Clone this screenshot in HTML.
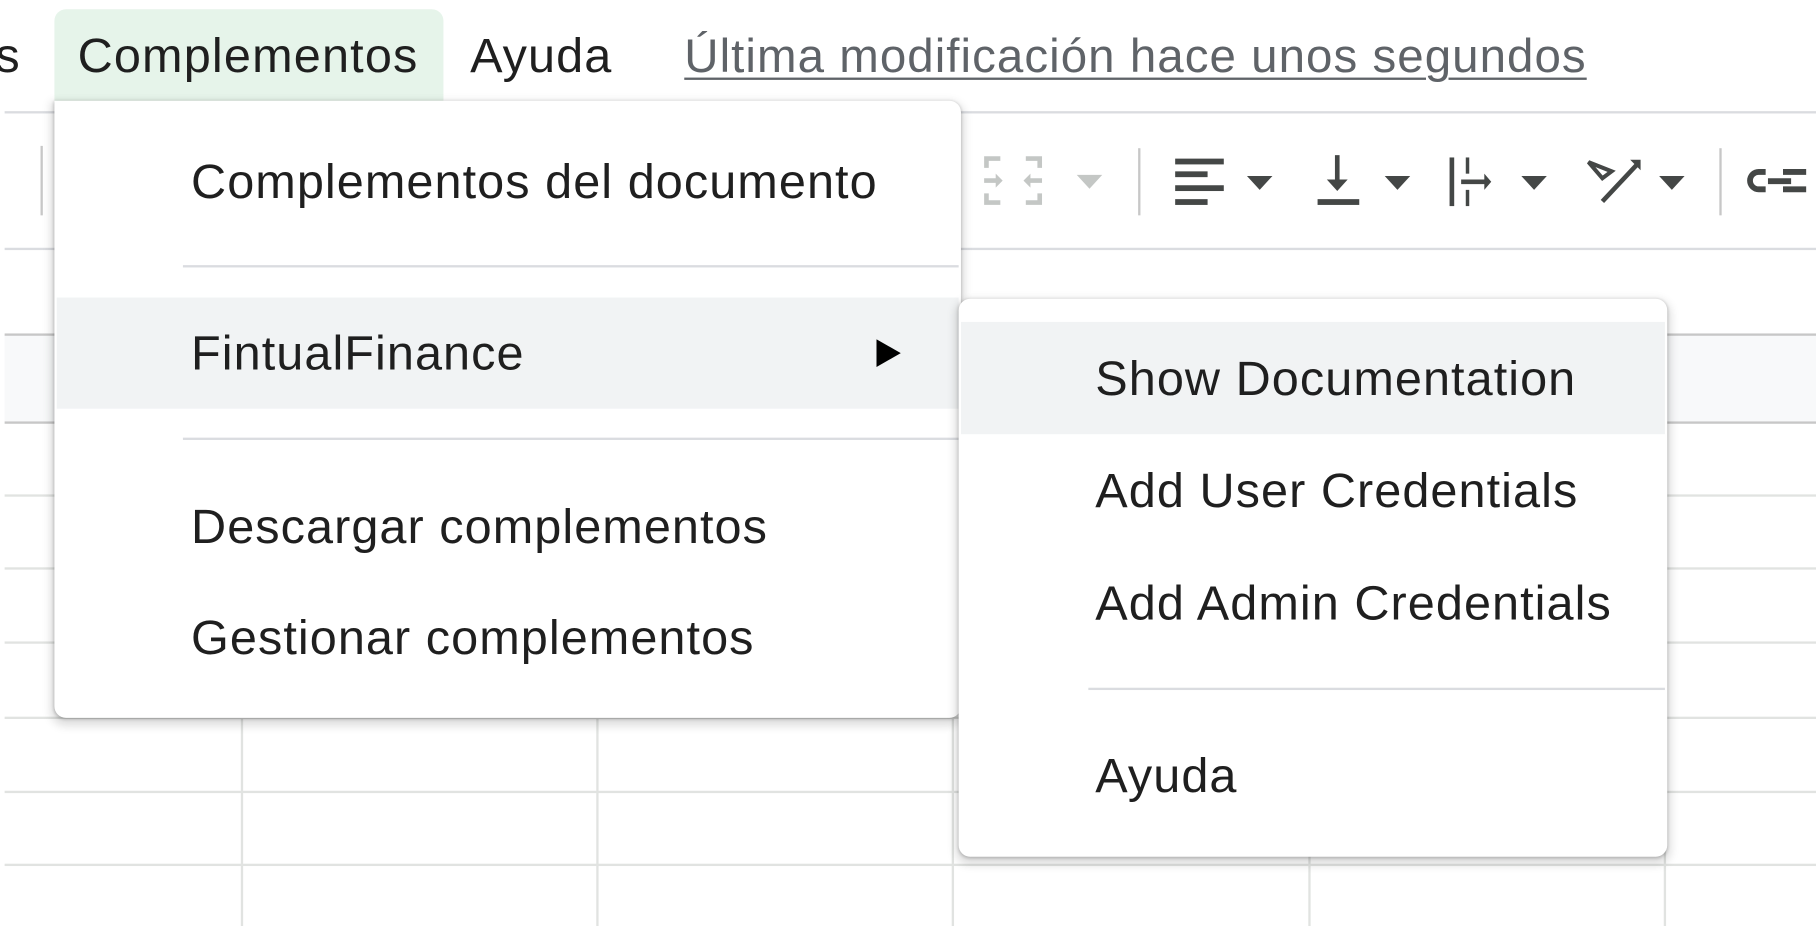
<!DOCTYPE html>
<html><head><meta charset="utf-8"><style>
html,body{margin:0;padding:0;width:1816px;height:924px;overflow:hidden;background:#fff}
#w{position:absolute;left:0;top:0;width:1570px;height:800px;transform:scale(1.1578);transform-origin:0 0;font-family:"Liberation Sans",Arial,sans-serif;color:#1f1f1f}
.a{position:absolute}
.h{position:absolute;height:2px;background:#dadce0}
.v{position:absolute;width:1.5px;background:#e1e3e1}
.t{position:absolute;white-space:nowrap;font-size:42px;line-height:40px}
.mi{position:absolute;white-space:nowrap;font-size:42px;line-height:40px;color:#1f1f1f;letter-spacing:0.9px}
</style></head><body><div id="w">
<div class="h" style="left:4px;top:96px;width:1566px"></div>
<div class="h" style="left:4px;top:214px;width:1566px"></div>
<div class="a" style="left:4px;top:289px;width:1566px;height:76px;background:#f8f9fa"></div>
<div class="h" style="left:4px;top:288px;width:1566px;background:#c7c7c7"></div>
<div class="h" style="left:4px;top:364px;width:1566px;background:#c7c7c7"></div>
<div class="h" style="left:4px;top:427px;width:1566px;background:#e1e3e1"></div>
<div class="h" style="left:4px;top:490px;width:1566px;background:#e1e3e1"></div>
<div class="h" style="left:4px;top:554px;width:1566px;background:#e1e3e1"></div>
<div class="h" style="left:4px;top:619px;width:1566px;background:#e1e3e1"></div>
<div class="h" style="left:4px;top:683px;width:1566px;background:#e1e3e1"></div>
<div class="h" style="left:4px;top:746px;width:1566px;background:#e1e3e1"></div>
<div class="v" style="left:208px;top:620px;height:180px"></div>
<div class="v" style="left:515px;top:620px;height:180px"></div>
<div class="v" style="left:822px;top:620px;height:180px"></div>
<div class="v" style="left:1130px;top:365px;height:435px"></div>
<div class="v" style="left:1437px;top:365px;height:435px"></div>
<div class="a" style="left:35px;top:126px;width:2px;height:60px;background:#c7c7c7"></div>
<div class="a" style="left:983px;top:128px;width:2px;height:58px;background:#c7c7c7"></div>
<div class="a" style="left:1485px;top:128px;width:2px;height:58px;background:#c7c7c7"></div>
<svg class="a" style="left:840px;top:120px" width="730" height="80" viewBox="840 120 730 80">
 <g fill="#c4c7c5">
  <path d="M850 135h14v4h-10v6h-4zM886 135h14v10h-4v-6h-10zM850 167h4v6h10v4h-14zM896 167h4v10h-14v-4h10z"/>
  <path d="M850 154h10v-4l6 6-6 6v-4h-10zM900 154h-10v-4l-6 6 6 6v-4h10z"/>
  <path d="M930 151h22l-11 12z"/>
 </g>
 <g fill="#444746">
  <rect x="1015" y="137" width="42" height="5"/><rect x="1015" y="148" width="28" height="5"/><rect x="1015" y="160" width="42" height="5"/><rect x="1015" y="172" width="28" height="5"/>
  <path d="M1077 152h22l-11 12z"/>
  <rect x="1153" y="134" width="4" height="28"/><path d="M1146 155l9 10 9-10z"/><rect x="1138" y="172" width="36" height="5"/>
  <path d="M1196 152h22l-11 12z"/>
  <rect x="1252" y="136" width="4" height="42"/><rect x="1266" y="136" width="3" height="14"/><rect x="1266" y="164" width="3" height="14"/><path d="M1262 155h20v-5l6 7-6 7v-5h-20z"/>
  <path d="M1314 152h22l-11 12z"/>
  <path d="M1372 140l20 8-8 6z" fill="none" stroke="#444746" stroke-width="3.5"/><path d="M1384 174l30-32" stroke="#444746" stroke-width="4"/><path d="M1408 138h9v9z"/>
  <path d="M1433 152h22l-11 12z"/>
  <path d="M1525 146h-6a10 10 0 0 0 0 20h6v-5h-6a5 5 0 0 1 0-10h6zM1527 154h20v5h-20zM1540 146h20v5h-20zM1540 161h20v5h-20z"/>
 </g>
</svg>
<div class="a" style="left:47px;top:8px;width:336px;height:82px;background:#e6f4ea;border-radius:10px 10px 0 0"></div>
<div class="t" style="left:-4px;top:28px">s</div>
<div class="t" style="left:67px;top:28px;letter-spacing:1px">Complementos</div>
<div class="t" style="left:406px;top:28px;letter-spacing:0.9px">Ayuda</div>
<div class="t" style="left:591px;top:28px;font-size:41px;color:#5f6368;text-decoration:underline;text-decoration-thickness:2px;text-underline-offset:5px;letter-spacing:0.9px">Última modificación hace unos segundos</div>
<div class="a" style="left:47px;top:87px;width:783px;height:533px;background:#fff;border-radius:0 10px 10px 10px;box-shadow:0 4px 8px 3px rgba(0,0,0,0.13),0 1px 3px rgba(0,0,0,0.25)"></div>
<div class="mi" style="left:165px;top:137px">Complementos del documento</div>
<div class="h" style="left:158px;top:229px;width:670px"></div>
<div class="a" style="left:49px;top:257px;width:779px;height:96px;background:#f1f3f4"></div>
<div class="mi" style="left:165px;top:285px">FintualFinance</div>
<svg class="a" style="left:757px;top:293px" width="22" height="24"><path d="M0 0L21 12L0 24z" fill="#000"/></svg>
<div class="h" style="left:158px;top:378px;width:670px"></div>
<div class="mi" style="left:165px;top:435px">Descargar complementos</div>
<div class="mi" style="left:165px;top:531px">Gestionar complementos</div>
<div class="a" style="left:828px;top:258px;width:612px;height:482px;background:#fff;border-radius:10px;box-shadow:0 4px 8px 3px rgba(0,0,0,0.13),0 1px 3px rgba(0,0,0,0.25)"></div>
<div class="a" style="left:830px;top:278px;width:608px;height:97px;background:#f1f3f4"></div>
<div class="mi" style="left:946px;top:307px">Show Documentation</div>
<div class="mi" style="left:946px;top:404px">Add User Credentials</div>
<div class="mi" style="left:946px;top:501px">Add Admin Credentials</div>
<div class="h" style="left:940px;top:594px;width:498px"></div>
<div class="mi" style="left:946px;top:650px">Ayuda</div>
</div></body></html>
